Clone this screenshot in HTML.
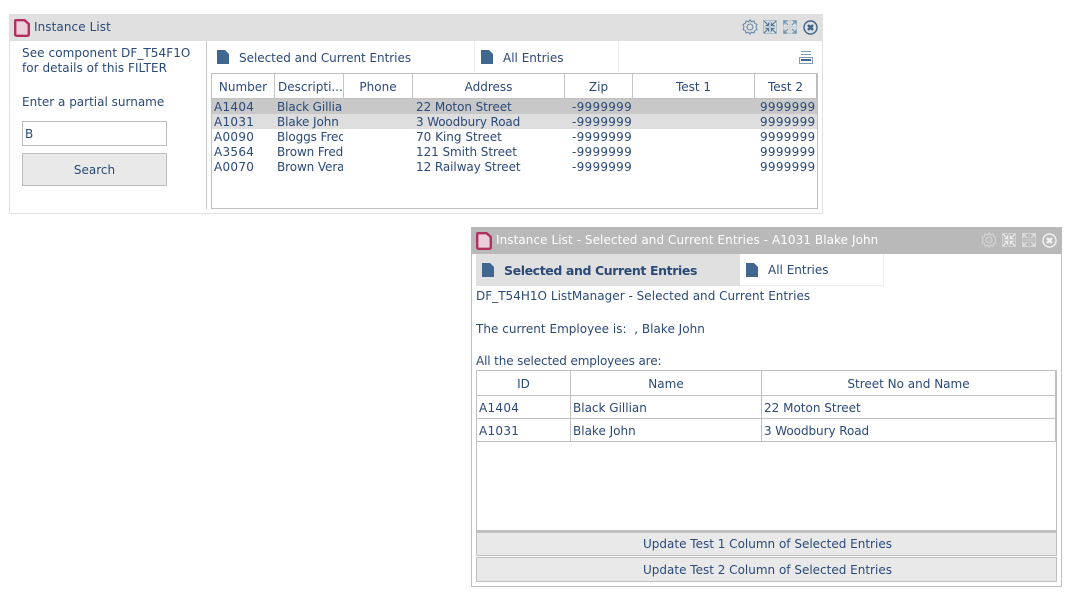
<!DOCTYPE html>
<html><head><meta charset="utf-8"><style>
html,body{margin:0;padding:0;background:#fff;width:1082px;height:609px;overflow:hidden}
body{position:relative;font-family:"DejaVu Sans","Liberation Sans",sans-serif;font-size:12px;color:#2b4a78}
.b,.t{position:absolute;box-sizing:border-box}
.t{white-space:nowrap;line-height:15px;height:15px}
.c{text-align:center}
.k{overflow:hidden;letter-spacing:-.1px}
.n{letter-spacing:.28px}
svg{position:absolute;overflow:visible}
</style></head><body>
<!-- Window 1 -->
<div class="b" style="left:9px;top:14px;width:814px;height:200px;border:1px solid #e2e2e2;border-top:0"></div>
<div class="b" style="left:9px;top:14px;width:814px;height:27px;background:#e0e0e0"></div>
<svg style="left:14px;top:19px" width="16" height="18"><path d="M2 1.200H10.500L14.800 5V15.300Q14.800 16.800 13.300 16.800H2.700Q1.200 16.800 1.200 15.300V2Q1.200 1.200 2 1.200Z" fill="#ebcfdb" stroke="#b23060" stroke-width="2.400"/></svg>
<div class="t" style="left:34px;top:20px;letter-spacing:.08px">Instance List</div>
<svg style="left:742px;top:19px" width="16" height="16" fill="none" stroke="#6d8aa8" stroke-width="1.100"><path d="M8 .8L9.500 2.800 12 2 12.700 4.400 15 5.400 14 8 15 10.600 12.700 11.600 12 14 9.500 13.200 8 15.200 6.500 13.200 4 14 3.300 11.600 1 10.600 2 8 1 5.400 3.300 4.400 4 2 6.500 2.800Z"/><circle cx="8" cy="8" r="3"/></svg>
<svg style="left:763px;top:20px" width="14" height="14" fill="none"><path d="M.5 .5H13.500V13.500H.5ZM.5 7H13.500M7 .5V13.500" stroke="#a9bccb" stroke-width="1"/><path d="M1 1L5 5M13 1L9 5M1 13L5 9M13 13L9 9" stroke="#4f7697" stroke-width="1.200"/><path d="M5.500 2.500V5.500H2.500M8.500 2.500V5.500H11.500M5.500 11.500V8.500H2.500M8.500 11.500V8.500H11.500" stroke="#4f7697" stroke-width="1.100"/></svg>
<svg style="left:783px;top:20px" width="14" height="14" fill="none"><path d="M.5 .5H13.500V13.500H.5ZM.5 7H13.500M7 .5V13.500" stroke="#bccad6" stroke-width="1"/><path d="M1 1L5 5M13 1L9 5M1 13L5 9M13 13L9 9" stroke="#6f90ac" stroke-width="1.200"/><path d="M1 4.500V1H4.500M13 4.500V1H9.500M1 9.500V13H4.500M13 9.500V13H9.500" stroke="#6f90ac" stroke-width="1.300"/></svg>
<svg style="left:803px;top:20px" width="15" height="15" fill="none"><circle cx="7.500" cy="7.500" r="6.500" stroke="#3f6486" stroke-width="1.400"/><path d="M5 5L10 10M10 5L5 10" stroke="#3f6486" stroke-width="2.600"/></svg>

<div class="t" style="left:22px;top:46px;letter-spacing:.08px">See component DF_T54F1O</div>
<div class="t" style="left:22px;top:61px;letter-spacing:.04px">for details of this FILTER</div>
<div class="t" style="left:22px;top:95px">Enter a partial surname</div>
<div class="b" style="left:22px;top:121px;width:145px;height:25px;border:1px solid #bdbdbd"></div>
<div class="t" style="left:25px;top:127px">B</div>
<div class="b" style="left:22px;top:153px;width:145px;height:33px;border:1px solid #bdbdbd;background:#e9e9e9"></div>
<div class="t c" style="left:22px;width:145px;top:163px">Search</div>
<div class="b" style="left:206px;top:41px;width:1px;height:168px;background:#c8c8c8"></div>

<!-- tabs 1 -->
<svg style="left:217px;top:50px" width="12" height="14"><path d="M0 0H8L12 4V14H0Z" fill="#3f678f"/></svg>
<div class="t" style="left:239px;top:51px;letter-spacing:-.03px">Selected and Current Entries</div>
<div class="b" style="left:474px;top:41px;width:1px;height:31px;background:#eee"></div>
<svg style="left:481px;top:50px" width="12" height="14"><path d="M0 0H8L12 4V14H0Z" fill="#3f678f"/></svg>
<div class="t" style="left:503px;top:51px">All Entries</div>
<div class="b" style="left:618px;top:41px;width:1px;height:31px;background:#eee"></div>
<svg style="left:799px;top:51px" width="14" height="13"><path d="M2 .5H12M2 3.500H12" stroke="#7f9ab4" fill="none"/><path d="M.5 6.500H13.500V12.500H.5Z" stroke="#7f9ab4" fill="none"/><path d="M2 9H12" stroke="#3f678f" stroke-width="2"/></svg>

<!-- grid 1 -->
<div class="b" style="left:211px;top:73px;width:607px;height:136px;border:1px solid #c0c0c0"></div>
<div class="b" style="left:212px;top:98px;width:605px;height:1px;background:#c0c0c0"></div>
<div class="b" style="left:212px;top:99px;width:605px;height:15px;background:#c8c8c8"></div>
<div class="b" style="left:212px;top:114px;width:605px;height:15px;background:#dedede"></div>
<div class="b" style="left:816px;top:74px;width:1px;height:24px;background:#bcbcbc"></div>
<div class="b" style="left:274px;top:74px;width:1px;height:24px;background:#c4c4c4"></div>
<div class="b" style="left:343px;top:74px;width:1px;height:24px;background:#c4c4c4"></div>
<div class="b" style="left:412px;top:74px;width:1px;height:24px;background:#c4c4c4"></div>
<div class="b" style="left:564px;top:74px;width:1px;height:24px;background:#c4c4c4"></div>
<div class="b" style="left:632px;top:74px;width:1px;height:24px;background:#c4c4c4"></div>
<div class="b" style="left:754px;top:74px;width:1px;height:24px;background:#c4c4c4"></div>
<div class="t c" style="left:212px;width:62px;top:80px">Number</div>
<div class="t" style="left:278px;top:80px">Descripti...</div>
<div class="t c" style="left:344px;width:68px;top:80px">Phone</div>
<div class="t c" style="left:413px;width:151px;top:80px">Address</div>
<div class="t c" style="left:565px;width:67px;top:80px">Zip</div>
<div class="t c" style="left:633px;width:121px;top:80px">Test 1</div>
<div class="t c" style="left:755px;width:61px;top:80px">Test 2</div>

<div class="t n" style="left:214px;top:100px">A1404</div><div class="t k" style="left:277px;width:66px;top:100px">Black Gillian</div><div class="t" style="left:416px;top:100px;letter-spacing:-.07px">22 Moton Street</div><div class="t n" style="left:572px;top:100px">-9999999</div><div class="t n" style="left:760px;top:100px">9999999</div>
<div class="t n" style="left:214px;top:115px">A1031</div><div class="t k" style="left:277px;width:66px;top:115px">Blake John</div><div class="t" style="left:416px;top:115px;letter-spacing:-.13px">3 Woodbury Road</div><div class="t n" style="left:572px;top:115px">-9999999</div><div class="t n" style="left:760px;top:115px">9999999</div>
<div class="t n" style="left:214px;top:130px">A0090</div><div class="t k" style="left:277px;width:66px;top:130px">Bloggs Fred</div><div class="t" style="left:416px;top:130px">70 King Street</div><div class="t n" style="left:572px;top:130px">-9999999</div><div class="t n" style="left:760px;top:130px">9999999</div>
<div class="t n" style="left:214px;top:145px">A3564</div><div class="t k" style="left:277px;width:66px;top:145px">Brown Fred</div><div class="t" style="left:416px;top:145px;letter-spacing:-.07px">121 Smith Street</div><div class="t n" style="left:572px;top:145px">-9999999</div><div class="t n" style="left:760px;top:145px">9999999</div>
<div class="t n" style="left:214px;top:160px">A0070</div><div class="t k" style="left:277px;width:66px;top:160px">Brown Vera</div><div class="t" style="left:416px;top:160px;letter-spacing:-.07px">12 Railway Street</div><div class="t n" style="left:572px;top:160px">-9999999</div><div class="t n" style="left:760px;top:160px">9999999</div>

<!-- Window 2 -->
<div class="b" style="left:471px;top:227px;width:591px;height:360px;border:1px solid #c0c0c0;border-top:0"></div>
<div class="b" style="left:471px;top:227px;width:591px;height:27px;background:#b9b9b9"></div>
<svg style="left:476px;top:232px" width="16" height="18"><path d="M2 1.200H10.500L14.800 5V15.300Q14.800 16.800 13.300 16.800H2.700Q1.200 16.800 1.200 15.300V2Q1.200 1.200 2 1.200Z" fill="#ebcfdb" stroke="#b23060" stroke-width="2.400"/></svg>
<div class="t" style="left:496px;top:233px;color:#fff;letter-spacing:.07px">Instance List - Selected and Current Entries - A1031 Blake John</div>
<svg style="left:981px;top:232px" width="16" height="16" fill="none" stroke="#d6d6d6" stroke-width="1.100"><path d="M8 .8L9.500 2.800 12 2 12.700 4.400 15 5.400 14 8 15 10.600 12.700 11.600 12 14 9.500 13.200 8 15.200 6.500 13.200 4 14 3.300 11.600 1 10.600 2 8 1 5.400 3.300 4.400 4 2 6.500 2.800Z"/><circle cx="8" cy="8" r="3"/></svg>
<svg style="left:1002px;top:233px" width="14" height="14" fill="none"><path d="M.5 .5H13.500V13.500H.5ZM.5 7H13.500M7 .5V13.500" stroke="#d2d2d2" stroke-width="1"/><path d="M1 1L5 5M13 1L9 5M1 13L5 9M13 13L9 9" stroke="#f0f0f0" stroke-width="1.200"/><path d="M5.500 2.500V5.500H2.500M8.500 2.500V5.500H11.500M5.500 11.500V8.500H2.500M8.500 11.500V8.500H11.500" stroke="#f0f0f0" stroke-width="1.100"/></svg>
<svg style="left:1022px;top:233px" width="14" height="14" fill="none"><path d="M.5 .5H13.500V13.500H.5ZM.5 7H13.500M7 .5V13.500" stroke="#cdcdcd" stroke-width="1"/><path d="M1 1L5 5M13 1L9 5M1 13L5 9M13 13L9 9" stroke="#e2e2e2" stroke-width="1.200"/><path d="M1 4.500V1H4.500M13 4.500V1H9.500M1 9.500V13H4.500M13 9.500V13H9.500" stroke="#e2e2e2" stroke-width="1.300"/></svg>
<svg style="left:1042px;top:233px" width="15" height="15" fill="none"><circle cx="7.500" cy="7.500" r="6.500" stroke="#f2f2f2" stroke-width="1.400"/><path d="M5 5L10 10M10 5L5 10" stroke="#f2f2f2" stroke-width="2.600"/></svg>

<div class="b" style="left:476px;top:254px;width:264px;height:32px;background:#e0e0e0"></div>
<svg style="left:482px;top:263px" width="12" height="14"><path d="M0 0H8L12 4V14H0Z" fill="#3f678f"/></svg>
<div class="t" style="left:504px;top:263px;font-weight:bold;font-size:12.500px;letter-spacing:-.39px">Selected and Current Entries</div>
<svg style="left:746px;top:263px" width="12" height="14"><path d="M0 0H8L12 4V14H0Z" fill="#3f678f"/></svg>
<div class="t" style="left:768px;top:263px">All Entries</div>
<div class="b" style="left:740px;top:285px;width:144px;height:1px;background:#eee"></div>
<div class="b" style="left:883px;top:254px;width:1px;height:32px;background:#eee"></div>

<div class="t" style="left:476px;top:289px;letter-spacing:.02px">DF_T54H1O ListManager - Selected and Current Entries</div>
<div class="t" style="left:476px;top:322px;letter-spacing:.02px">The current Employee is: &nbsp;, Blake John</div>
<div class="t" style="left:476px;top:354px;letter-spacing:-.13px">All the selected employees are:</div>

<!-- grid 2 -->
<div class="b" style="left:476px;top:370px;width:581px;height:161px;border:1px solid #c0c0c0"></div>
<div class="b" style="left:477px;top:395px;width:579px;height:1px;background:#c0c0c0"></div>
<div class="b" style="left:477px;top:418px;width:579px;height:1px;background:#c0c0c0"></div>
<div class="b" style="left:477px;top:441px;width:579px;height:1px;background:#c0c0c0"></div>
<div class="b" style="left:570px;top:371px;width:1px;height:71px;background:#c0c0c0"></div>
<div class="b" style="left:761px;top:371px;width:1px;height:71px;background:#c0c0c0"></div>
<div class="b" style="left:1055px;top:371px;width:1px;height:71px;background:#c0c0c0"></div>
<div class="t c" style="left:477px;width:93px;top:377px">ID</div>
<div class="t c" style="left:571px;width:190px;top:377px">Name</div>
<div class="t c" style="left:762px;width:293px;top:377px">Street No and Name</div>
<div class="t n" style="left:479px;top:401px">A1404</div><div class="t" style="left:573px;top:401px">Black Gillian</div><div class="t" style="left:764px;top:401px">22 Moton Street</div>
<div class="t n" style="left:479px;top:424px">A1031</div><div class="t" style="left:573px;top:424px">Blake John</div><div class="t" style="left:764px;top:424px;letter-spacing:-.07px">3 Woodbury Road</div>

<div class="b" style="left:476px;top:531px;width:581px;height:25px;border:1px solid #c0c0c0;border-top-width:2px;background:#e9e9e9"></div>
<div class="t c" style="left:477px;width:581px;top:537px">Update Test 1 Column of Selected Entries</div>
<div class="b" style="left:476px;top:557px;width:581px;height:25px;border:1px solid #c0c0c0;background:#e9e9e9"></div>
<div class="t c" style="left:477px;width:581px;top:563px">Update Test 2 Column of Selected Entries</div>
</body></html>
